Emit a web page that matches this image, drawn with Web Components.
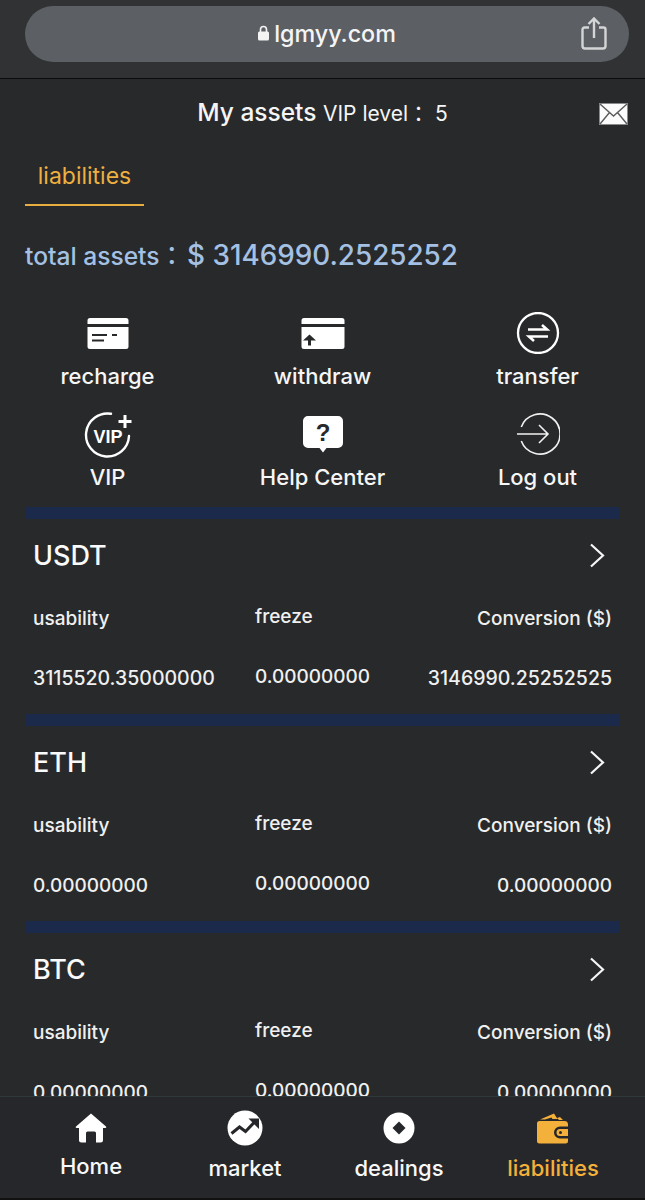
<!DOCTYPE html>
<html>
    <head>
        <meta charset="utf-8">
        <style>
            html, body { margin: 0; padding: 0; background: #28292b; }
            body { font-family: Inter, "Noto Sans CJK TC", "Liberation Sans", sans-serif; color: #f5f5f5; }
        </style>
    </head>
    <body>
        <app-shell>
            <browser-bar slot="top" host-name="lgmyy.com"></browser-bar>
            <asset-header slot="top"></asset-header>
            <asset-tab slot="top">liabilities</asset-tab>
            <total-assets slot="top" amount="$ 3146990.2525252"></total-assets>
            <action-grid slot="top">
                <action-item label="recharge">
                    <svg width="42" height="31" viewBox="0 0 42 31"><path fill="#fff" fill-rule="evenodd" d="M3 0h36a2.500 2.500 0 0 1 2.500 2.500V6H.5V2.500A2.500 2.500 0 0 1 3 0zM.5 9h41v19.500A2.500 2.500 0 0 1 39 31H3a2.500 2.500 0 0 1-2.500-2.500zM5 16v2h15v-2zm20 0v2h5v-2zM5 21.500v2h12v-2z"/></svg>
                </action-item>
                <action-item label="withdraw">
                    <svg width="44" height="31" viewBox="0 0 44 31"><path fill="#fff" fill-rule="evenodd" d="M3 0h38a2.500 2.500 0 0 1 2.500 2.500V6H.5V2.500A2.500 2.500 0 0 1 3 0zM.5 9h43v19.500A2.500 2.500 0 0 1 41 31H3a2.500 2.500 0 0 1-2.500-2.500zM7 27.500h3v-5h5L8.500 16.500 2 22.500h5z"/></svg>
                </action-item>
                <action-item label="transfer">
                    <svg width="44" height="42" viewBox="0 0 44 42"><circle cx="22" cy="21" r="20" fill="none" stroke="#fff" stroke-width="2.300"/><path fill="none" stroke="#fff" stroke-width="2.600" d="M12 17.500h19l-5-4.500M32 24.500H13l5 4.500"/></svg>
                </action-item>
                <action-item label="VIP" row="2">
                    <svg width="48" height="48" viewBox="0 0 48 48"><path fill="none" stroke="#fff" stroke-width="2.400" stroke-linecap="round" d="M27 3.800A21.500 21.500 0 1 0 45 26"/><path fill="none" stroke="#fff" stroke-width="3" d="M41 5v13M34.500 11.500h13"/><text x="24" y="33" text-anchor="middle" font-family="Liberation Sans" font-weight="700" font-size="18" fill="#fff" textLength="29" lengthAdjust="spacingAndGlyphs">VIP</text></svg>
                </action-item>
                <action-item label="Help Center" row="2">
                    <svg width="42" height="38" viewBox="0 0 42 38"><path fill="#fff" d="M6 1h30a5 5 0 0 1 5 5v22a5 5 0 0 1-5 5H24.500L21 37.500 17.500 33H6a5 5 0 0 1-5-5V6a5 5 0 0 1 5-5z"/><text x="21" y="26" text-anchor="middle" font-family="Liberation Sans" font-weight="700" font-size="24" fill="#28292b">?</text></svg>
                </action-item>
                <action-item label="Log out" row="2">
                    <svg width="44" height="42" viewBox="0 0 44 42"><path fill="none" stroke="#f1f1f1" stroke-width="1.600" d="M5.300 14A20 20 0 1 1 5.300 28M1 21h31M23 12l9 9-9 9"/></svg>
                </action-item>
            </action-grid>
            <coin-card name="USDT" usable="3115520.35000000" frozen="0.00000000" converted="3146990.25252525"></coin-card>
            <coin-card name="ETH" usable="0.00000000" frozen="0.00000000" converted="0.00000000"></coin-card>
            <coin-card name="BTC" usable="0.00000000" frozen="0.00000000" converted="0.00000000"></coin-card>
            <tab-bar slot="bottom">
                <nav-item label="Home">
                    <svg width="32" height="30" viewBox="0 0 32 30"><path fill="#fff" d="M16 .5 31 13.500c.6.6.2 1.500-.6 1.500H28v12a2.500 2.500 0 0 1-2.500 2.500H21V20a1.500 1.500 0 0 0-1.500-1.500h-7A1.500 1.500 0 0 0 11 20v9.500H6.500A2.500 2.500 0 0 1 4 27V15H1.600c-.8 0-1.200-.9-.6-1.500z"/></svg>
                </nav-item>
                <nav-item label="market" low>
                    <svg width="36" height="36" viewBox="0 0 36 36"><circle cx="18" cy="18" r="17.500" fill="#fff"/><path fill="none" stroke="#26272a" stroke-width="3" d="M4.500 23.500l8-6.500 6 4.500 9.500-10"/><path fill="#26272a" d="M21.500 8.500h10.500V19z"/></svg>
                </nav-item>
                <nav-item label="dealings" low>
                    <svg width="32" height="32" viewBox="0 0 32 32"><circle cx="16" cy="16" r="15.500" fill="#fff"/><path fill="#26272a" d="M16 9.500 22.500 16 16 22.500 9.500 16z"/></svg>
                </nav-item>
                <nav-item label="liabilities" low active>
                    <svg width="32" height="31" viewBox="0 0 32 31"><path fill="#f3b03a" d="M3 6.500 17 .5l3.500 5.500h-5l-1-1.500L8 6.500zM2.500 8h25A3.500 3.500 0 0 1 31 11v2.500h-8a6 6 0 0 0 0 12h8V28a2.500 2.500 0 0 1-2.500 2.500h-26A2.500 2.500 0 0 1 0 28V10.500A2.500 2.500 0 0 1 2.500 8zM20 5l3-1 3 3h-4zM23 16h8v7h-8a3.500 3.500 0 0 1 0-7z"/><circle cx="23.500" cy="19.500" r="1.500" fill="#26272a"/></svg>
                </nav-item>
            </tab-bar>
        </app-shell>

        <script>
            class AppShell extends HTMLElement {
                constructor() {
                    super();
                    const shadowRoot = this.attachShadow({ mode: 'open' });
                    shadowRoot.innerHTML = `
                        <style>
                            :host { display: flex; flex-direction: column; height: 1200px; width: 645px; overflow: hidden; background: #28292b; }
                            main { flex: 1; min-height: 0; overflow: hidden; }
                        </style>
                        <main>
                            <slot name="top"></slot>
                            <slot></slot>
                        </main>
                        <slot name="bottom"></slot>
                    `;
                }
            }
            customElements.define('app-shell', AppShell);

            class BrowserBar extends HTMLElement {
                constructor() {
                    super();
                    const shadowRoot = this.attachShadow({ mode: 'open' });
                    shadowRoot.innerHTML = `
                        <style>
                            :host { display: block; box-sizing: border-box; padding: 6px 16px 0 25px; background: #303234; border-bottom: 1px solid #0c0c0d; height: 79px; }
                            .pill { height: 56px; border-radius: 28px; background: #5c5f63; display: flex; align-items: center; justify-content: center; position: relative; font-size: 23.300px; font-weight: 500; color: #f4f4f4; gap: 5px; padding-bottom: 2px; box-sizing: border-box; }
                            .share { position: absolute; right: 22px; top: 11px; }
                        </style>
                        <div class="pill">
                            <svg width="11" height="16" viewBox="0 0 11 16"><path fill="none" stroke="#f4f4f4" stroke-width="1.600" d="M2.500 7V4.500a3 3 0 0 1 6 0V7"/><rect y="6.500" width="11" height="9" rx="1.500" fill="#f4f4f4"/></svg>
                            <span id="host"></span>
                            <svg class="share" width="26" height="33" viewBox="0 0 26 33"><path fill="none" stroke="#d4d5d6" stroke-width="2.400" d="M8 10.500H3.500a2 2 0 0 0-2 2V29a2.500 2.500 0 0 0 2.500 2.500h18a2.500 2.500 0 0 0 2.500-2.500V12.500a2 2 0 0 0-2-2H18M13 21V2M7.500 7 13 1.500 18.500 7"/></svg>
                        </div>
                    `;
                    shadowRoot.getElementById('host').textContent = this.getAttribute('host-name');
                }
            }
            customElements.define('browser-bar', BrowserBar);

            class AssetHeader extends HTMLElement {
                constructor() {
                    super();
                    const shadowRoot = this.attachShadow({ mode: 'open' });
                    shadowRoot.innerHTML = `
                        <style>
                            :host { display: flex; height: 70px; align-items: center; justify-content: center; position: relative; }
                            .title { font-size: 24.500px; font-weight: 500; white-space: pre; line-height: 30px; margin-top: -2px; }
                            .vip { font-size: 21px; font-weight: 400; }
                            svg { position: absolute; right: 17px; top: 24px; }
                        </style>
                        <div class="title">My assets <span class="vip">VIP level： 5</span></div>
                        <svg width="29" height="22" viewBox="0 0 29 22"><rect x=".5" y=".5" width="28" height="21" fill="#fbfbfb" stroke="#8a8a8a"/><path fill="none" stroke="#5a5b5d" stroke-width="1.400" d="M1 1 14.500 13 28 1M1 21 10.500 9.500M28 21 18.500 9.500"/></svg>
                    `;
                }
            }
            customElements.define('asset-header', AssetHeader);

            class AssetTab extends HTMLElement {
                constructor() {
                    super();
                    const shadowRoot = this.attachShadow({ mode: 'open' });
                    shadowRoot.innerHTML = `
                        <style>
                            :host { display: block; padding-left: 25px; height: 57px; }
                            .tab { width: 119px; height: 57px; box-sizing: border-box; border-bottom: 2px solid #e8ad3e; color: #eeb040; font-size: 23px; text-align: center; line-height: 54px; }
                        </style>
                        <div class="tab"><slot></slot></div>
                    `;
                }
            }
            customElements.define('asset-tab', AssetTab);

            class TotalAssets extends HTMLElement {
                constructor() {
                    super();
                    const shadowRoot = this.attachShadow({ mode: 'open' });
                    shadowRoot.innerHTML = `
                        <style>
                            :host { display: flex; align-items: baseline; padding: 33px 0 0 25px; height: 97px; box-sizing: border-box; color: #a4c1e3; white-space: pre; font-size: 24.600px; font-weight: 500; line-height: 32px; }
                            .amount { font-size: 27.800px; margin-left: 3px; }
                        </style>
                        <span>total assets：</span><span class="amount" id="amount"></span>
                    `;
                    shadowRoot.getElementById('amount').textContent = this.getAttribute('amount');
                }
            }
            customElements.define('total-assets', TotalAssets);

            class ActionGrid extends HTMLElement {
                constructor() {
                    super();
                    const shadowRoot = this.attachShadow({ mode: 'open' });
                    shadowRoot.innerHTML = `
                        <style>
                            :host { display: grid; grid-template-columns: repeat(3, 215px); justify-content: center; grid-auto-rows: 101px; height: 204px; }
                        </style>
                        <slot></slot>
                    `;
                }
            }
            customElements.define('action-grid', ActionGrid);

            class ActionItem extends HTMLElement {
                constructor() {
                    super();
                    const shadowRoot = this.attachShadow({ mode: 'open' });
                    shadowRoot.innerHTML = `
                        <style>
                            :host { display: flex; flex-direction: column; align-items: center; font-size: 22px; font-weight: 500; color: #f6f6f6; }
                            .icon { height: 44px; display: flex; align-items: center; justify-content: center; margin-top: 8px; }
                            .label { line-height: 26px; margin-top: 8px; }
                        </style>
                        <div class="icon"><slot></slot></div>
                        <div class="label" id="label"></div>
                    `;
                    shadowRoot.getElementById('label').textContent = this.getAttribute('label');
                }
            }
            customElements.define('action-item', ActionItem);

            class CoinCard extends HTMLElement {
                constructor() {
                    super();
                    const shadowRoot = this.attachShadow({ mode: 'open' });
                    shadowRoot.innerHTML = `
                        <style>
                            :host { display: block; height: 207px; box-sizing: border-box; }
                            .rule { height: 12px; margin: 0 25px; background: #1b2a4a; }
                            .head { display: flex; justify-content: space-between; align-items: center; height: 72px; padding: 0 40px 0 33px; font-size: 27px; font-weight: 500; color: #fafafa; }
                            .cols { display: grid; grid-template-columns: 222px 1fr auto; padding: 0 33px; margin-top: 15px; font-size: 19px; font-weight: 500; color: #f0f0f0; }
                            .col { display: flex; flex-direction: column; gap: 35px; line-height: 25px; }
                            .mid { margin-top: -2px; }
                            .end { text-align: right; }
                            .num { font-size: 19.500px; }
                            .num.zero { font-size: 19px; }
                        </style>
                        <div class="rule"></div>
                        <div class="head">
                            <span id="name"></span>
                            <svg width="16" height="25" viewBox="0 0 16 25"><path fill="none" stroke="#f6f6f6" stroke-width="2.200" d="M2 1.500 14 12.500 2 23.500"/></svg>
                        </div>
                        <div class="cols">
                            <div class="col"><span>usability</span><span class="num" id="usable"></span></div>
                            <div class="col mid"><span>freeze</span><span class="num" id="frozen"></span></div>
                            <div class="col end"><span>Conversion ($)</span><span class="num" id="converted"></span></div>
                        </div>
                    `;
                    for (const key of ['name', 'usable', 'frozen', 'converted']) {
                        const el = shadowRoot.getElementById(key);
                        el.textContent = this.getAttribute(key);
                        // all-zero figures run a little narrower in the reference
                        if (el.textContent.startsWith('0.')) el.classList.add('zero');
                    }
                }
            }
            customElements.define('coin-card', CoinCard);

            class TabBar extends HTMLElement {
                constructor() {
                    super();
                    const shadowRoot = this.attachShadow({ mode: 'open' });
                    shadowRoot.innerHTML = `
                        <style>
                            :host { display: grid; grid-template-columns: repeat(4, 154px); padding: 0 14px; height: 104px; box-sizing: border-box; background: #26272a; border-top: 1px solid #2f3a38; border-bottom: 2px solid #111; }
                        </style>
                        <slot></slot>
                    `;
                }
            }
            customElements.define('tab-bar', TabBar);

            class NavItem extends HTMLElement {
                constructor() {
                    super();
                    const shadowRoot = this.attachShadow({ mode: 'open' });
                    shadowRoot.innerHTML = `
                        <style>
                            :host { display: flex; flex-direction: column; align-items: center; font-size: 22px; font-weight: 500; color: #f8f8f8; }
                            :host([active]) { color: #f3b03a; }
                            .icon { height: 36px; margin-top: 13px; display: flex; align-items: center; justify-content: center; }
                            .label { line-height: 28px; margin-top: 6px; }
                            :host([low]) .label { margin-top: 8px; }
                        </style>
                        <div class="icon"><slot></slot></div>
                        <div class="label" id="label"></div>
                    `;
                    shadowRoot.getElementById('label').textContent = this.getAttribute('label');
                }
            }
            customElements.define('nav-item', NavItem);
        </script>
    </body>
</html>
